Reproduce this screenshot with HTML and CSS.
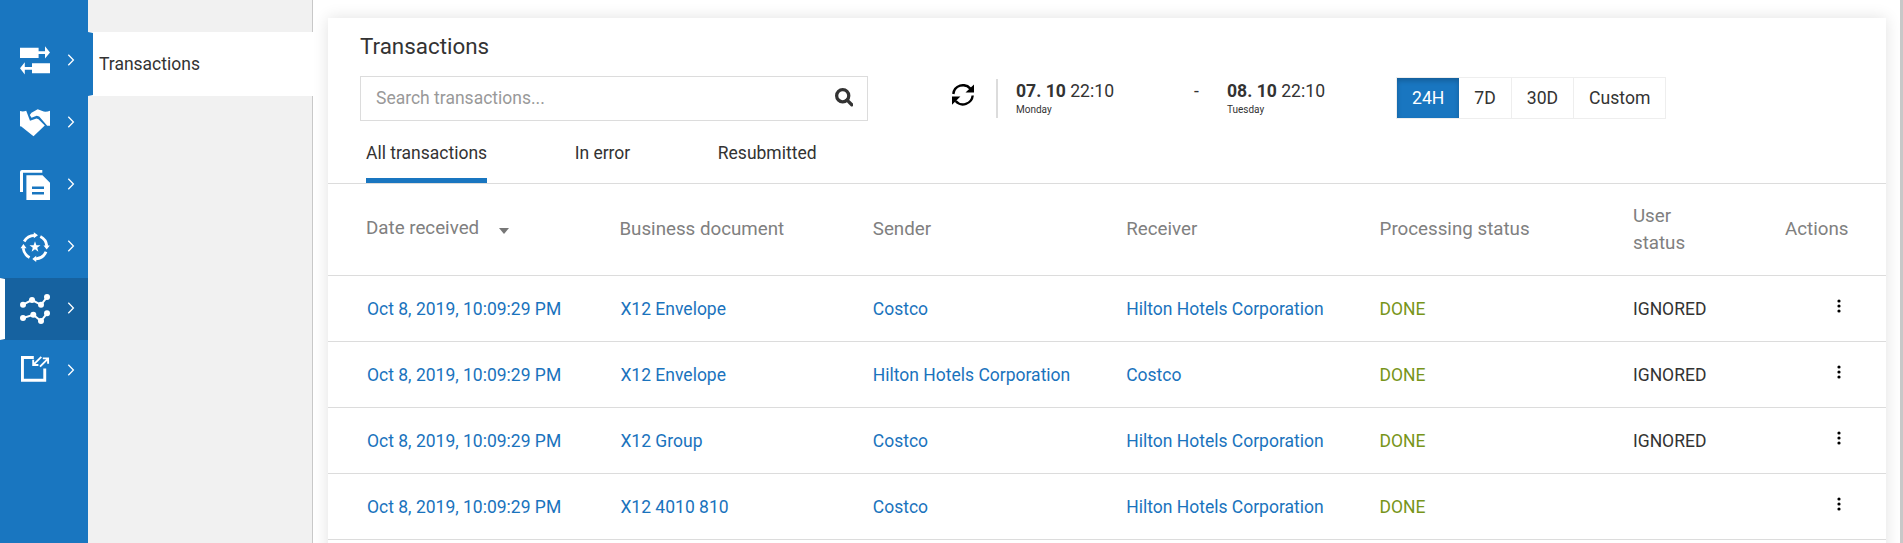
FILE: index.html
```html
<!DOCTYPE html>
<html lang="en">
<head>
<meta charset="utf-8">
<title>Transactions</title>
<link rel="stylesheet" href="styles.css">
</head>
<body>
<div class="app">
  <nav class="rail">
    <a class="rail-item"><svg class="rail-icon" viewBox="0 0 30 30"><path d="M0 1.8H18.6V5.2H25V.3L30 6.5L25 12.5V8H18.6V12H0ZM30 17.2H12V21H4.8V16.2L0 22.3L4.8 28.4V23.8H12V27.3H30Z"/></svg><svg class="chevron" viewBox="0 0 8 12"><path d="M1.3 .8L6.4 6L1.3 11.2"/></svg></a>
    <a class="rail-item"><svg class="rail-icon" viewBox="0 0 30 30"><path d="M0 3Q3 4 6.2 2.8L10 12.8L16.5 10.6L18.5 11.2L24.8 17.4L13.5 28.2L1.3 18.4L0 18.2ZM9.8 7L11.5 4.8L17.7 1.2L23.7 3.6Q27 4 30 2.8V17.8H27.2L19.2 8.4L16.7 7.8L11.5 9.8Z"/></svg><svg class="chevron" viewBox="0 0 8 12"><path d="M1.3 .8L6.4 6L1.3 11.2"/></svg></a>
    <a class="rail-item"><svg class="rail-icon" viewBox="0 0 30 30"><path fill-rule="evenodd" d="M2 0H22.3V2.8H3V22H0V2Q0 0 2 0ZM6.4 5.3H22.5L30 12.7V30H6.4ZM12 16.4V18.9H24V16.4ZM12 22.1V24.6H24V22.1Z"/></svg><svg class="chevron" viewBox="0 0 8 12"><path d="M1.3 .8L6.4 6L1.3 11.2"/></svg></a>
    <a class="rail-item"><svg class="rail-icon" viewBox="0 0 30 30"><g class="stroke"><path d="M4.2 9.5A12 12 0 0 1 14.5 3.3M20.3 4.6A12 12 0 0 1 26.8 14M26 19.8A12 12 0 0 1 16 26.9M9.6 25.5A12 12 0 0 1 3.2 16.2"/></g><path d="M13.8 .2L18 3.2L13.8 6.3ZM23.5 13.5H29.8L26.7 17.6ZM16.2 23.8V30L12.3 26.9ZM.5 16.2H6.6L3.4 12ZM15 9.2L16.4 13.2H20.5L17.2 15.7L18.4 19.7L15 17.3L11.6 19.7L12.8 15.7L9.5 13.2H13.6Z"/></svg><svg class="chevron" viewBox="0 0 8 12"><path d="M1.3 .8L6.4 6L1.3 11.2"/></svg></a>
    <a class="rail-item active"><svg class="rail-icon" viewBox="0 0 30 30"><g class="stroke thin"><path d="M3 10.7L12 6L21 10.8L27 3.2M3 24L13.3 20.8L21 27L27 19.3"/></g><circle cx="3" cy="10.7" r="3"/><circle cx="12" cy="6" r="3"/><circle cx="21" cy="10.8" r="3"/><circle cx="27" cy="3" r="3"/><circle cx="3" cy="24" r="3"/><circle cx="13.3" cy="20.8" r="3"/><circle cx="21" cy="27" r="3"/><circle cx="27" cy="19.3" r="3"/></svg><svg class="chevron" viewBox="0 0 8 12"><path d="M1.3 .8L6.4 6L1.3 11.2"/></svg></a>
    <a class="rail-item"><svg class="rail-icon" viewBox="0 0 30 30"><path d="M1 0H13.8V2.9H3.9V22.8H23.3V12.4H26.2V25.7H1Z"/><g class="stroke fine"><path d="M21.3 .8L13.3 8.8M13.2 3.8V9H18.4M20 10.6L28 2.6M22.8 2.4H28.1V7.7"/></g></svg><svg class="chevron" viewBox="0 0 8 12"><path d="M1.3 .8L6.4 6L1.3 11.2"/></svg></a>
  </nav>
  <aside class="submenu"><a class="submenu-item">Transactions</a></aside>
  <main class="content">
    <section class="card">
      <h1 class="title">Transactions</h1>
      <div class="toolbar">
        <div class="search"><span class="placeholder">Search transactions...</span>
          <svg class="search-icon" viewBox="0 0 18 18"><circle cx="7.5" cy="7.5" r="5.9"/><path d="M11.8 11.8L16.3 16.3"/></svg></div>
        <svg class="refresh" viewBox="0 0 22 22"><path class="arc" d="M1.3 10A9.8 9.8 0 0 1 18.4 4.6M20.7 11.5A9.8 9.8 0 0 1 3.6 17"/><path d="M22 .4V8.6H13.5ZM0 12.6H8.4L0 20.8Z"/></svg>
        <div class="range">
          <div class="date"><div class="when"><b>07. 10</b> 22:10</div><div class="day">Monday</div></div>
          <span class="dash">-</span>
          <div class="date"><div class="when"><b>08. 10</b> 22:10</div><div class="day">Tuesday</div></div>
        </div>
        <div class="periods"><a class="period selected">24H</a><a class="period">7D</a><a class="period">30D</a><a class="period">Custom</a></div>
      </div>
      <div class="tabs"><a class="tab current">All transactions</a><a class="tab">In error</a><a class="tab">Resubmitted</a></div>
      <div class="row head"><span class="sorted">Date received<i class="caret"></i></span><span>Business document</span><span>Sender</span><span>Receiver</span><span>Processing status</span><span class="narrow">User status</span><span>Actions</span></div>
      <div class="row"><a class="link">Oct 8, 2019, 10:09:29 PM</a><a class="link">X12 Envelope</a><a class="link">Costco</a><a class="link">Hilton Hotels Corporation</a><span class="done">DONE</span><span>IGNORED</span><svg class="dots" viewBox="0 0 4 14"><circle cx="2" cy="2" r="1.6"/><circle cx="2" cy="7" r="1.6"/><circle cx="2" cy="12" r="1.6"/></svg></div>
      <div class="row"><a class="link">Oct 8, 2019, 10:09:29 PM</a><a class="link">X12 Envelope</a><a class="link">Hilton Hotels Corporation</a><a class="link">Costco</a><span class="done">DONE</span><span>IGNORED</span><svg class="dots" viewBox="0 0 4 14"><circle cx="2" cy="2" r="1.6"/><circle cx="2" cy="7" r="1.6"/><circle cx="2" cy="12" r="1.6"/></svg></div>
      <div class="row"><a class="link">Oct 8, 2019, 10:09:29 PM</a><a class="link">X12 Group</a><a class="link">Costco</a><a class="link">Hilton Hotels Corporation</a><span class="done">DONE</span><span>IGNORED</span><svg class="dots" viewBox="0 0 4 14"><circle cx="2" cy="2" r="1.6"/><circle cx="2" cy="7" r="1.6"/><circle cx="2" cy="12" r="1.6"/></svg></div>
      <div class="row"><a class="link">Oct 8, 2019, 10:09:29 PM</a><a class="link">X12 4010 810</a><a class="link">Costco</a><a class="link">Hilton Hotels Corporation</a><span class="done">DONE</span><span></span><svg class="dots" viewBox="0 0 4 14"><circle cx="2" cy="2" r="1.6"/><circle cx="2" cy="7" r="1.6"/><circle cx="2" cy="12" r="1.6"/></svg></div>
    </section>
  </main>
  <div class="scrollbar"></div>
</div>
</body>
</html>
```
FILE: styles.css
```css
* { box-sizing: border-box; }
body { margin: 0; font-family: Roboto, sans-serif; font-size: 17.5px; color: #333; background: #fff; overflow: hidden; }
.app { display: flex; height: 543px; overflow: hidden; }

.rail { flex: none; width: 88px; padding-top: 30px; background: #1976c0; }
.rail-item { display: flex; align-items: flex-start; height: 62px; padding: 16px 0 0 15px; border-left: 5px solid #1976c0; }
.rail-item.active { padding-top: 15px; background: #1662a0; border: 1px solid #1662a0; border-width: 1px 0 1px 5px; border-left-color: #fff; }
.rail-icon { width: 30px; height: 30px; fill: #fff; }
.rail-icon .stroke { fill: none; stroke: #fff; stroke-width: 2.8; }
.rail-icon .thin { stroke-width: 2; }
.rail-icon .fine { stroke-width: 1.9; }
.chevron { width: 8px; height: 12px; margin: 7.5px 0 0 16.5px; fill: none; stroke: #fff; stroke-width: 1.3; }

.submenu { flex: none; width: 225px; padding-top: 32px; background: linear-gradient(to right, #f1f1f1 224px, #c8c8c8 224px); }
.submenu-item { display: flex; align-items: center; height: 64px; padding-left: 6px; border: 1px solid #fff; border-width: 1px 0 1px 5px; border-left-color: #1976c0; background: #fff; }

.content { flex: 1; padding: 18px 14px 0 15px; overflow: hidden; }
.card { height: 600px; background: #fff; box-shadow: 0 0 15px rgba(0, 0, 0, .12); }
.scrollbar { flex: none; width: 3px; background: #c8c8c8; }

.title { margin: 0; padding: 15px 0 0 32px; height: 58px; font-size: 22.4px; font-weight: 400; line-height: 26px; }
.toolbar { display: flex; height: 45px; padding-left: 32px; align-items: flex-start; }
.search { display: flex; justify-content: space-between; width: 508px; height: 45px; padding: 11px 14px 0 15px; border: 1px solid #dcdcdc; }
.placeholder { color: #999; line-height: 21px; }
.search-icon { width: 18.5px; height: 18.5px; fill: none; stroke: #333; stroke-width: 3.2; stroke-linecap: round; }
.refresh { width: 22px; height: 22px; margin: 8px 0 0 84px; fill: #000; }
.refresh .arc { fill: none; stroke: #000; stroke-width: 2.4; }
.range { display: flex; width: 400px; height: 39px; margin: 3px 0 0 22px; padding-left: 18px; border-left: 2px solid #dcdcdc; }
.date { flex: none; width: 178px; }
.dash { flex: none; width: 33px; line-height: 24px; }
.when { font-size: 17.6px; line-height: 24px; }
.day { font-size: 10px; line-height: 13px; }
.periods { display: flex; margin: 1px 0 0 0; height: 42px; border: 1px solid #eee; font-size: 17.6px; }
.period { padding: 0 15px; line-height: 40px; border-right: 1px solid #eee; }
.period:last-child { border-right: 0; }
.period.selected { color: #fff; background: #1976c0; border-right: 0; box-shadow: inset 0 3px 5px rgba(0, 0, 0, .2); }

.tabs { display: flex; gap: 87.5px; height: 63px; padding: 19px 0 0 38px; border-bottom: 1px solid #dcdcdc; }
.tab { height: 43px; line-height: 26px; }
.tab.current { border-bottom: 5px solid #1976c0; }

.row { display: grid; grid-template-columns: repeat(5, 253.4px) 152px 1fr; align-items: center; height: 66px; padding-left: 38px; border-bottom: 1px solid #dcdcdc; }
.head { height: 92px; color: #808080; font-size: 18.75px; line-height: 27px; }
.sorted { display: flex; align-items: center; margin-top: -2px; }
.caret { margin: 5px 0 0 20px; border: 5.5px solid transparent; border-top: 6px solid #777; border-bottom: 0; }
.narrow { width: 90px; }
.link { color: #1a73bd; }
.row > .link:nth-child(-n+2) { padding-left: 1px; }
.done { color: #78951a; }
.dots { width: 4px; height: 14px; margin: -5px 0 0 52px; fill: #000; }
```
